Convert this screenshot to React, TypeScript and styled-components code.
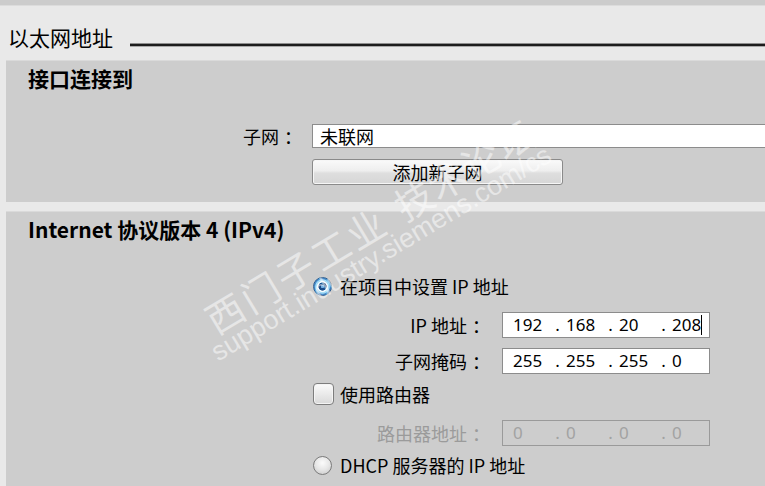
import React from "react";
import styled, { createGlobalStyle } from "styled-components";

const GlobalStyle = createGlobalStyle`
  html, body { margin: 0; padding: 0; }
  body {
    background: #e9e9e9;
    font-family: "Noto Sans CJK SC", "Noto Sans", sans-serif;
    color: #000;
    overflow: hidden;
  }
`;

const Page = styled.div`
  position: relative;
  width: 765px;
  height: 486px;
  overflow: hidden;
  background: #e9e9e9;
  display: flex;
  flex-direction: column;
`;

const TopBand = styled.div`
  height: 5px;
  background: #cccccc;
  border-bottom: 1px solid #dcdcdc;
`;

const SectionTitle = styled.div`
  height: 54px;
  box-sizing: border-box;
  padding: 18px 0 0 8px;
  display: flex;
  align-items: flex-start;
`;

const TitleText = styled.div`
  font-size: 21px;
  line-height: 26px;
  font-weight: 400;
  white-space: nowrap;
`;

const Rule = styled.div`
  flex: 1;
  margin: 19px 0 0 17px;
  height: 2px;
  background: #1c1c1c;
  border-top: 1px solid #8e8e8e;
  border-bottom: 1px solid #a8a8a8;
`;

const Panel = styled.div<{ $mt?: number; $pb?: number }>`
  margin-left: 6px;
  margin-top: ${(p) => p.$mt ?? 0}px;
  background: #cdcdcd;
  border-top: 1px solid #dadada;
  padding: 2px 0 ${(p) => p.$pb ?? 0}px 0;
  display: flex;
  flex-direction: column;
  flex: ${(p) => (p.$pb === undefined ? 1 : "none")};
`;

const PanelHeading = styled.div`
  padding-left: 22px;
  font-size: 21px;
  line-height: 30px;
  font-weight: 700;
  white-space: nowrap;
`;

const SubnetRow = styled.div`
  margin-top: 31px;
  margin-right: -12px;
  display: grid;
  grid-template-columns: 291px 1fr;
  column-gap: 15px;
  align-items: center;
`;

const Label = styled.div<{ $disabled?: boolean }>`
  text-align: right;
  font-size: 18px;
  line-height: 24px;
  white-space: nowrap;
  color: ${(p) => (p.$disabled ? "#9b9b9b" : "#000")};
`;

const Colon = styled.span`
  display: inline-block;
  width: 18px;
  box-sizing: border-box;
  padding-left: 5px;
  text-align: left;
`;

const TextInput = styled.div`
  height: 24px;
  box-sizing: border-box;
  background: #fff;
  border: 1px solid #8c8c8c;
  padding-left: 7px;
  font-size: 18px;
  line-height: 22px;
`;

const Button = styled.div`
  margin: 11px 0 0 306px;
  width: 251px;
  height: 26px;
  box-sizing: border-box;
  border: 1px solid #8a8a8a;
  border-radius: 3px;
  background: linear-gradient(#fafafa 0%, #eeeeee 45%, #dedede 55%, #d6d6d6 100%);
  box-shadow: inset 0 0 0 1px #f6f6f6;
  text-align: center;
  font-size: 18px;
  line-height: 24px;
`;

const Options = styled.div`
  margin-left: 307px;
  display: flex;
  flex-direction: column;
`;

const ChoiceRow = styled.div<{ $mt: number }>`
  margin-top: ${(p) => p.$mt}px;
  height: 26px;
  display: flex;
  align-items: center;
  font-size: 18px;
  white-space: nowrap;
`;

const Radio = styled.span<{ $checked?: boolean }>`
  width: 19px;
  height: 19px;
  border-radius: 50%;
  box-sizing: border-box;
  margin-right: 8px;
  flex: none;
  ${(p) =>
    p.$checked
      ? `
    border: 1px solid #2f5f90;
    background: radial-gradient(circle at 50% 50%, #7ab3e6 0 1.3px, #1a4c88 2px 3.8px, #f4fbff 4.4px 5.2px, #a6ddf6 5.8px 6.8px, #4a90cf 7.6px);
  `
      : `
    border: 1px solid #7b7b7b;
    background: radial-gradient(circle at 50% 35%, #fbfbfb 0, #e6e6e6 50%, #c4c4c4 100%);
  `}
`;

const Checkbox = styled.span`
  width: 21px;
  height: 22px;
  box-sizing: border-box;
  border: 1px solid #7d7d7d;
  border-radius: 4px;
  background: linear-gradient(#fbfbfb, #d9d9d9);
  box-shadow: inset 0 0 0 1px #f4f4f4;
  margin-right: 6px;
  flex: none;
`;

const FieldRow = styled.div<{ $mt: number }>`
  margin-top: ${(p) => p.$mt}px;
  display: grid;
  grid-template-columns: 172px 208px;
  column-gap: 17px;
  align-items: center;
`;

const IpBox = styled.div<{ $disabled?: boolean }>`
  height: 26px;
  box-sizing: border-box;
  border: 1px solid ${(p) => (p.$disabled ? "#9a9a9a" : "#8c8c8c")};
  background: ${(p) => (p.$disabled ? "#cdcdcd" : "#fff")};
  color: ${(p) => (p.$disabled ? "#a2a2a2" : "#000")};
  padding-left: 10px;
  display: flex;
  align-items: center;
  font-family: "Noto Sans", "Noto Sans CJK SC", sans-serif;
  font-size: 17px;
`;

const Octet = styled.span`
  width: 36px;
  line-height: 22px;
`;

const Dot = styled.span`
  width: 17px;
  text-align: center;
  line-height: 22px;
`;

const LastOctet = styled.span`
  position: relative;
  line-height: 22px;
`;

const Caret = styled.span`
  position: absolute;
  left: 100%;
  top: 1px;
  width: 1px;
  height: 20px;
  background: #000;
`;

const Watermark = styled.div`
  position: absolute;
  left: 198px;
  top: 305px;
  transform-origin: 0 0;
  transform: rotate(-31deg);
  pointer-events: none;
  color: rgba(255, 255, 255, 0.5);
  white-space: nowrap;
  display: flex;
  flex-direction: column;
`;

const WmCn = styled.div`
  font-family: "Noto Sans CJK SC", sans-serif;
  font-size: 38px;
  line-height: 40px;
  letter-spacing: 3px;
`;

const WmGap = styled.span`
  margin-left: 15px;
  letter-spacing: 1px;
`;

const WmUrl = styled.div`
  font-family: "Liberation Sans", sans-serif;
  font-size: 27px;
  line-height: 27px;
  margin: -3px 0 0 -12px;
`;

const IpField: React.FC<{ parts: string[]; disabled?: boolean; caret?: boolean }> = ({
  parts,
  disabled,
  caret,
}) => (
  <IpBox $disabled={disabled}>
    <Octet>{parts[0]}</Octet>
    <Dot>.</Dot>
    <Octet>{parts[1]}</Octet>
    <Dot>.</Dot>
    <Octet>{parts[2]}</Octet>
    <Dot>.</Dot>
    <LastOctet>
      {parts[3]}
      {caret && <Caret />}
    </LastOctet>
  </IpBox>
);

export default function App() {
  return (
    <>
      <GlobalStyle />
      <Page>
        <TopBand />
        <SectionTitle>
          <TitleText>以太网地址</TitleText>
          <Rule />
        </SectionTitle>

        <Panel $pb={17}>
          <PanelHeading>接口连接到</PanelHeading>
          <SubnetRow>
            <Label>
              子网<Colon>：</Colon>
            </Label>
            <TextInput>未联网</TextInput>
          </SubnetRow>
          <Button>添加新子网</Button>
        </Panel>

        <Panel $mt={9}>
          <PanelHeading>Internet 协议版本 4 (IPv4)</PanelHeading>
          <Options>
            <ChoiceRow $mt={29}>
              <Radio $checked />
              在项目中设置 IP 地址
            </ChoiceRow>
            <FieldRow $mt={13}>
              <Label>
                IP 地址<Colon>：</Colon>
              </Label>
              <IpField parts={["192", "168", "20", "208"]} caret />
            </FieldRow>
            <FieldRow $mt={10}>
              <Label>
                子网掩码<Colon>：</Colon>
              </Label>
              <IpField parts={["255", "255", "255", "0"]} />
            </FieldRow>
            <ChoiceRow $mt={7}>
              <Checkbox />
              使用路由器
            </ChoiceRow>
            <FieldRow $mt={13}>
              <Label $disabled>
                路由器地址<Colon>：</Colon>
              </Label>
              <IpField parts={["0", "0", "0", "0"]} disabled />
            </FieldRow>
            <ChoiceRow $mt={6}>
              <Radio />
              DHCP 服务器的 IP 地址
            </ChoiceRow>
          </Options>
        </Panel>

        <Watermark>
          <WmCn>
            西门子工业<WmGap>技术论坛</WmGap>
          </WmCn>
          <WmUrl>support.industry.siemens.com/cs</WmUrl>
        </Watermark>
      </Page>
    </>
  );
}
